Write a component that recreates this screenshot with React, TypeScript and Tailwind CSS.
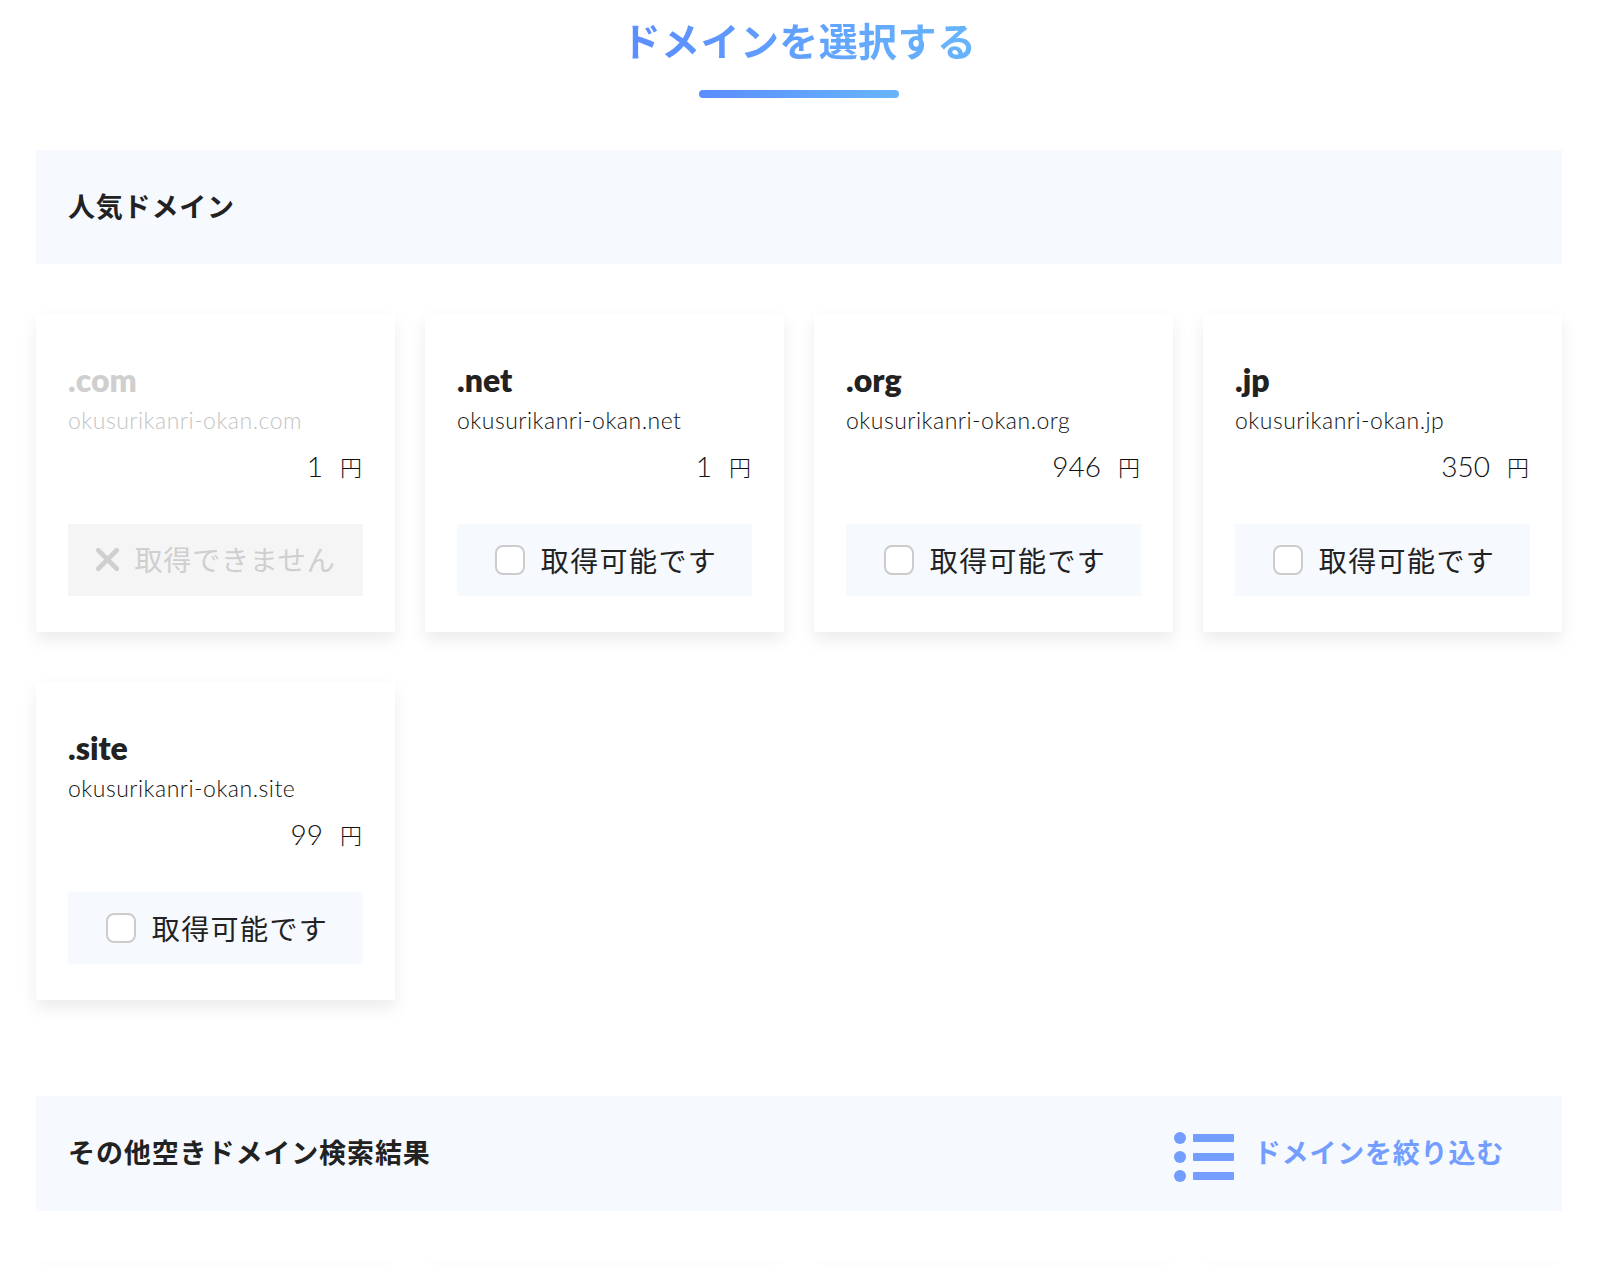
import { X } from "lucide-react"

const latin = "font-['Lato','Noto_Sans_CJK_JP',sans-serif]"

type Domain = {
  tld: string
  name: string
  price: string
  taken?: boolean
}

const domains: Domain[] = [
  { tld: ".com", name: "okusurikanri-okan.com", price: "1", taken: true },
  { tld: ".net", name: "okusurikanri-okan.net", price: "1" },
  { tld: ".org", name: "okusurikanri-okan.org", price: "946" },
  { tld: ".jp", name: "okusurikanri-okan.jp", price: "350" },
  { tld: ".site", name: "okusurikanri-okan.site", price: "99" },
]

function DomainCard({ domain }: { domain: Domain }) {
  return (
    <div className="h-[318px] bg-white px-8 pt-[44px] shadow-[0_8px_16px_rgba(0,0,0,0.08)]">
      <div className={`text-[32px] font-extrabold leading-[44px] ${domain.taken ? "text-[#cfcfcf]" : "text-[#222222]"}`}>
        {domain.tld}
      </div>
      <div className={`mt-[2px] text-[23px] font-light leading-[33px] tracking-[0.5px] ${domain.taken ? "text-[#c4c4c4]" : "text-[#111111]"}`}>
        {domain.name}
      </div>
      <div className="mt-[11px] flex h-[36px] items-center justify-end gap-[17px] pr-px text-[#111111]">
        <span className="text-[28px] font-light">{domain.price}</span>
        <span className="pt-[2px] text-[22px] font-light">円</span>
      </div>
      {domain.taken ? (
        <div className="mt-[40px] flex h-[72px] items-center justify-center gap-[8px] bg-[#f5f5f5] pb-px pr-[6px] text-[#cfcfcf]">
          <X className="h-[37px] w-[37px]" strokeWidth={3} />
          <span className="text-[28px] tracking-[0.03em]">取得できません</span>
        </div>
      ) : (
        <div className="mt-[40px] flex h-[72px] items-center justify-center gap-[16px] bg-[#f6f9fe] pl-[3px] text-[#222222]">
          <span className="h-[30px] w-[30px] rounded-[8px] border-2 border-[#cccccc] bg-white" />
          <span className="pt-[2px] text-[28px] tracking-[0.05em]">取得可能です</span>
        </div>
      )}
    </div>
  )
}

export default function App() {
  return (
    <div className={`h-[1266px] overflow-hidden bg-white px-[36px] ${latin}`}>
      <h1 className="mt-[17px] flex justify-center">
        <span className="bg-gradient-to-r from-[#5b8cff] to-[#68b5fb] bg-clip-text text-[39px] font-bold leading-[48px] tracking-[0.4px] text-transparent">
          ドメインを選択する
        </span>
      </h1>
      <div className="mx-auto mt-[25px] h-2 w-[200px] rounded-full bg-gradient-to-r from-[#5b8cff] to-[#68b5fb]" />

      <div className="mt-[52px] flex h-[114px] items-center bg-[#f6f9fe] px-8">
        <h2 className="text-[27px] font-bold tracking-[0.8px] text-[#222222]">人気ドメイン</h2>
      </div>

      <div className="mt-[50px] grid grid-cols-4 gap-x-[30px] gap-y-[50px]">
        {domains.map((d) => (
          <DomainCard key={d.tld} domain={d} />
        ))}
      </div>

      <div className="mt-[96px] flex h-[115px] items-center justify-between bg-[#f6f9fe] pl-8 pr-[58px]">
        <h2 className="text-[27px] font-bold tracking-[0.9px] text-[#222222]">その他空きドメイン検索結果</h2>
        <div className="flex items-center gap-[20px] text-[#739dff]">
          <svg className="mt-[7px]" width="60" height="50" viewBox="0 0 60 50" fill="currentColor">
            <circle cx="6" cy="6" r="6" />
            <circle cx="6" cy="25" r="6" />
            <circle cx="6" cy="44" r="6" />
            <rect x="19" y="2" width="41" height="8" rx="1" />
            <rect x="19" y="21" width="41" height="8" rx="1" />
            <rect x="19" y="40" width="41" height="8" rx="1" />
          </svg>
          <span className="text-[27px] font-bold tracking-[0.8px]">ドメインを絞り込む</span>
        </div>
      </div>

      {/* next row of results, only its top edge is on screen */}
      <div className="mt-[54px] grid grid-cols-4 gap-x-[30px]">
        {[0, 1, 2, 3].map((i) => (
          <div key={i} className="h-[318px] bg-white shadow-[0_8px_16px_rgba(0,0,0,0.08)]" />
        ))}
      </div>
    </div>
  )
}
